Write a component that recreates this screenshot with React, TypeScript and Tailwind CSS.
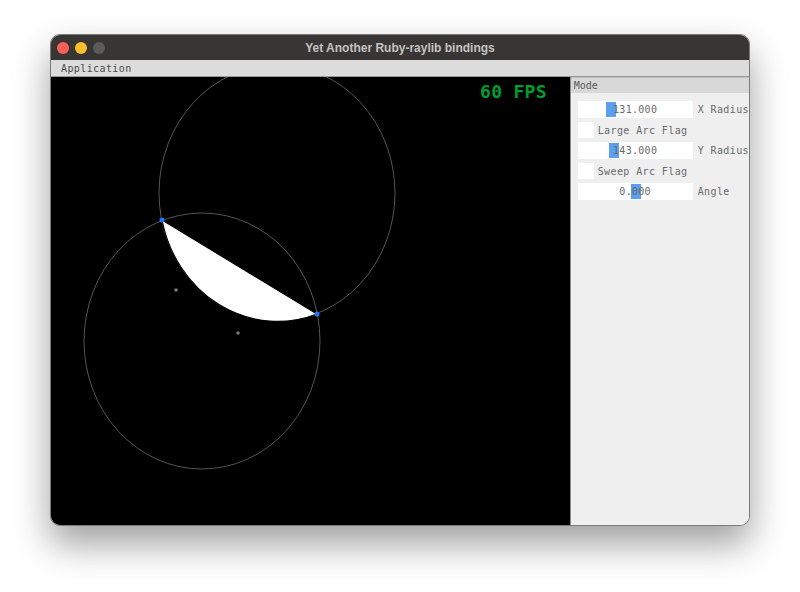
import React from "react";

const mono = { fontFamily: '"DejaVu Sans Mono", "Liberation Mono", monospace' };

interface ValueRow {
  value: string;
  label: string;
  cursor: string;
}

const ValueBox = ({ row }: { row: ValueRow }) => (
  <div className="flex items-center gap-[5px] h-[17px]">
    <div className="relative w-[115px] h-[17px] bg-white flex items-center justify-center">
      <div className={`absolute top-[1px] bottom-[1px] w-[10px] bg-[#5b9ff0] ${row.cursor}`} />
      <span className="relative text-[10px] text-[#6a6a6a] tracking-[0.3px]">{row.value}</span>
    </div>
    <span className="text-[10px] text-[#6a6a6a] tracking-[0.4px] whitespace-nowrap">{row.label}</span>
  </div>
);

const CheckRow = ({ label }: { label: string }) => (
  <div className="flex items-center gap-[4px] h-[17px]">
    <div className="w-[16px] h-[16px] bg-white" />
    <span className="text-[10px] text-[#6a6a6a] tracking-[0.4px] whitespace-nowrap">{label}</span>
  </div>
);

const Canvas = () => (
  <div className="relative w-[519px] h-full bg-black overflow-hidden">
    <svg width="519" height="448" className="absolute inset-0">
      {/* reference ellipses */}
      <ellipse cx="226" cy="116" rx="118" ry="128" fill="none" stroke="#555" strokeWidth="1" />
      <ellipse cx="151" cy="264" rx="118" ry="128" fill="none" stroke="#555" strokeWidth="1" />
      {/* filled arc segment */}
      <path d="M111 143 A118 128 0 0 0 266 237 Z" fill="#fff" stroke="#000" strokeWidth="1.2" />
      {/* control dots */}
      <circle cx="125" cy="213" r="1.8" fill="#7a7a7a" />
      <circle cx="187" cy="256" r="1.8" fill="#7a7a7a" />
      {/* endpoints */}
      <circle cx="111" cy="143" r="2.5" fill="#1a78ff" />
      <circle cx="266" cy="237" r="2.5" fill="#1a78ff" />
    </svg>
    <div
      className="absolute left-[429px] top-[6px] text-[18px] font-bold leading-none text-[#009e2f] tracking-[0.3px]"
      style={mono}
    >
      60 FPS
    </div>
  </div>
);

const rows: ValueRow[] = [
  { value: "131.000", label: "X Radius", cursor: "left-[28px]" },
  { value: "143.000", label: "Y Radius", cursor: "left-[31px]" },
  { value: "0.000", label: "Angle", cursor: "left-[53px]" },
];

const App = () => {
  return (
    <div className="w-[800px] h-[592px] bg-white pt-[34px] pl-[50px]">
      <div className="w-[700px] h-[492px] rounded-[10px] overflow-hidden flex flex-col bg-[#efefef] border border-[#7a7a7a] shadow-[0_18px_36px_rgba(0,0,0,0.38)]">
        {/* title bar */}
        <div className="relative h-[25px] bg-[#383634] flex items-center">
          <div className="flex items-center gap-[6px] pl-[6px]">
            <div className="w-[12px] h-[12px] rounded-full bg-[#fe5f57]" />
            <div className="w-[12px] h-[12px] rounded-full bg-[#febc2e]" />
            <div className="w-[12px] h-[12px] rounded-full bg-[#5b5a59]" />
          </div>
          <div
            className="absolute inset-0 flex items-center justify-center text-[12px] font-bold text-[#c4c3c2]"
            style={{ fontFamily: '"Liberation Sans", Arial, sans-serif' }}
          >
            Yet Another Ruby-raylib bindings
          </div>
        </div>
        {/* menu bar */}
        <div
          className="h-[17px] bg-[#dcdcdc] border-b border-[#9a9a9a] flex items-center pl-[10px] text-[10px] text-[#4a4a4a] tracking-[0.4px]"
          style={mono}
        >
          Application
        </div>
        {/* body */}
        <div className="flex flex-1 min-h-0">
          <Canvas />
          <div className="flex-1 flex flex-col border-l border-[#8a8a8a] bg-[#efefef]" style={mono}>
            <div className="h-[16px] bg-[#d8d8d8] border-t border-[#bdbdbd] flex items-center pl-[3px] text-[10px] text-[#5a5a5a]">
              Mode
            </div>
            <div className="flex flex-col gap-[3.5px] pl-[7px] pt-[8px]">
              <ValueBox row={rows[0]} />
              <CheckRow label="Large Arc Flag" />
              <ValueBox row={rows[1]} />
              <CheckRow label="Sweep Arc Flag" />
              <ValueBox row={rows[2]} />
            </div>
          </div>
        </div>
      </div>
    </div>
  );
};

export default App;
